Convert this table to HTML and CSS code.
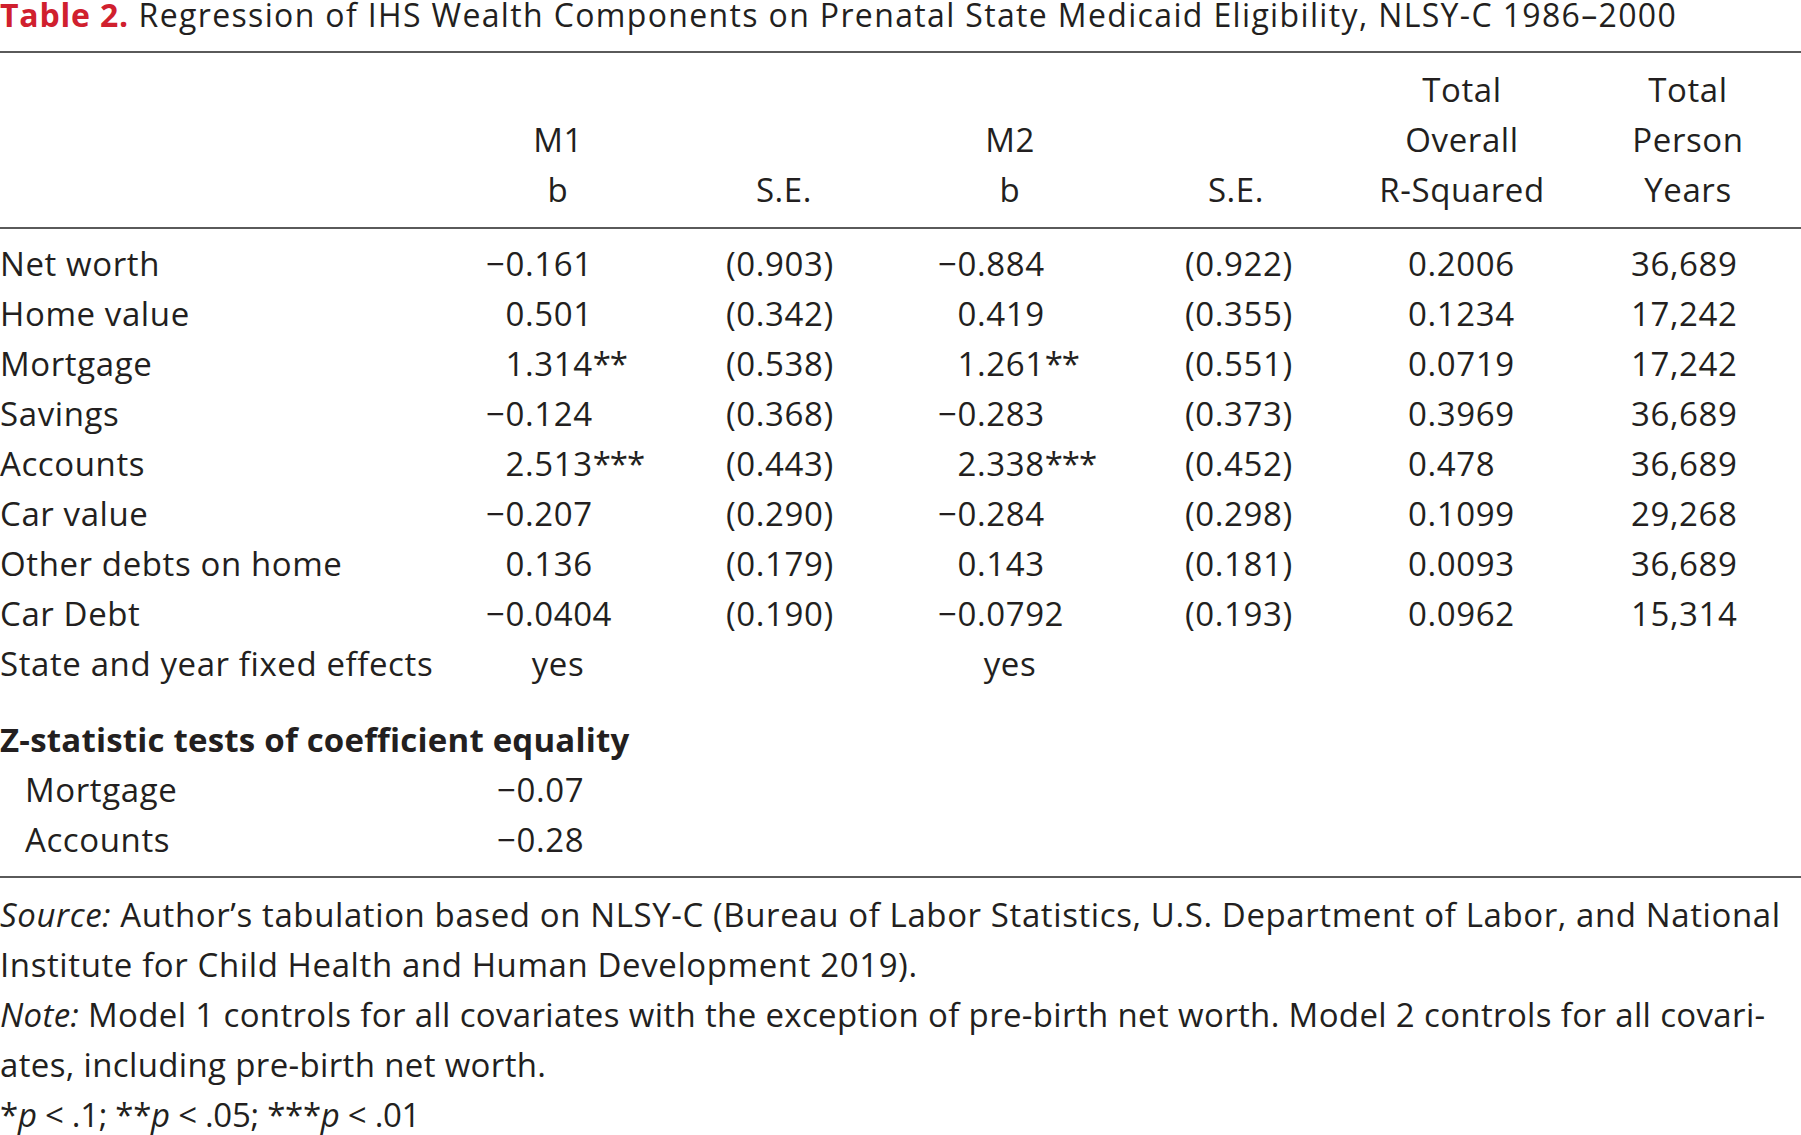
FILE: index.html
```html
<!DOCTYPE html>
<html lang="en">
<head>
<meta charset="utf-8">
<title>Table 2</title>
<link rel="stylesheet" href="styles.css">
</head>
<body>
<div class="page">
  <h1 class="title"><span class="tag">Table 2.</span> Regression of IHS Wealth Components on Prenatal State Medicaid Eligibility, NLSY-C 1986–2000</h1>

  <div class="thead">
    <div class="h"></div>
    <div class="h">M1<br>b</div>
    <div class="h">S.E.</div>
    <div class="h">M2<br>b</div>
    <div class="h">S.E.</div>
    <div class="h">Total<br>Overall<br>R-Squared</div>
    <div class="h">Total<br>Person<br>Years</div>
  </div>

  <div class="tbody">
    <div class="row"><div class="lbl">Net worth</div><div class="c1">−0.161</div><div class="c2">(0.903)</div><div class="c3">−0.884</div><div class="c4">(0.922)</div><div class="c5">0.2006</div><div class="c6">36,689</div></div>
    <div class="row"><div class="lbl">Home value</div><div class="c1 ps">0.501</div><div class="c2">(0.342)</div><div class="c3 ps">0.419</div><div class="c4">(0.355)</div><div class="c5">0.1234</div><div class="c6">17,242</div></div>
    <div class="row"><div class="lbl">Mortgage</div><div class="c1 ps">1.314<span class="st">**</span></div><div class="c2">(0.538)</div><div class="c3 ps">1.261<span class="st">**</span></div><div class="c4">(0.551)</div><div class="c5">0.0719</div><div class="c6">17,242</div></div>
    <div class="row"><div class="lbl">Savings</div><div class="c1">−0.124</div><div class="c2">(0.368)</div><div class="c3">−0.283</div><div class="c4">(0.373)</div><div class="c5">0.3969</div><div class="c6">36,689</div></div>
    <div class="row"><div class="lbl">Accounts</div><div class="c1 ps">2.513<span class="st">***</span></div><div class="c2">(0.443)</div><div class="c3 ps">2.338<span class="st">***</span></div><div class="c4">(0.452)</div><div class="c5">0.478</div><div class="c6">36,689</div></div>
    <div class="row"><div class="lbl">Car value</div><div class="c1">−0.207</div><div class="c2">(0.290)</div><div class="c3">−0.284</div><div class="c4">(0.298)</div><div class="c5">0.1099</div><div class="c6">29,268</div></div>
    <div class="row"><div class="lbl">Other debts on home</div><div class="c1 ps">0.136</div><div class="c2">(0.179)</div><div class="c3 ps">0.143</div><div class="c4">(0.181)</div><div class="c5">0.0093</div><div class="c6">36,689</div></div>
    <div class="row"><div class="lbl">Car Debt</div><div class="c1">−0.0404</div><div class="c2">(0.190)</div><div class="c3">−0.0792</div><div class="c4">(0.193)</div><div class="c5">0.0962</div><div class="c6">15,314</div></div>
    <div class="row"><div class="lbl">State and year fixed effects</div><div class="mid">yes</div><div></div><div class="mid">yes</div><div></div><div></div><div></div></div>
  </div>

  <div class="zstat">
    <div class="zhead">Z-statistic tests of coefficient equality</div>
    <div class="row"><div class="lbl ind">Mortgage</div><div class="cz">−0.07</div></div>
    <div class="row"><div class="lbl ind">Accounts</div><div class="cz">−0.28</div></div>
  </div>

  <div class="notes">
    <p><em>Source:</em> Author’s tabulation based on NLSY-C (Bureau of Labor Statistics, U.S. Department of Labor, and National<br>Institute for Child Health and Human Development 2019).</p>
    <p class="note"><em>Note:</em> Model 1 controls for all covariates with the exception of pre-birth net worth. Model 2 controls for all covari-<br>ates, including pre-birth net worth.</p>
    <p class="sig">*<em>p</em> &lt; .1; **<em>p</em> &lt; .05; ***<em>p</em> &lt; .01</p>
  </div>
</div>
</body>
</html>
```

FILE: styles.css
```css
html, body {
  margin: 0;
  padding: 0;
  background: #ffffff;
  overflow: hidden;
}

.page {
  width: 1801px;
  font-family: "Open Sans", "Liberation Sans", sans-serif;
  font-size: 33px;
  letter-spacing: 0.6px;
  line-height: 50px;
  color: #231f20;
  --cols: 445px repeat(6, 226px);
}

.title {
  margin: 0 0 21px 0;
  font-size: 32px;
  letter-spacing: 1.35px;
  line-height: 30px;
  font-weight: 400;
  white-space: nowrap;
}

.tag {
  color: #d0202e;
  font-weight: 700;
  letter-spacing: 0.8px;
}

.thead {
  display: grid;
  grid-template-columns: var(--cols);
  border-top: 2px solid #5a5a5a;
  border-bottom: 2px solid #5a5a5a;
  padding: 12px 0 12px;
}

.h {
  text-align: center;
  align-self: end;
}

.tbody {
  padding-top: 10px;
}

.row {
  display: grid;
  grid-template-columns: var(--cols);
  height: 50px;
  white-space: nowrap;
}

.c1, .c3 { padding-left: 41px; }
.c2 { padding-left: 55px; }
.c4 { padding-left: 62px; }
.c5 { padding-left: 59px; }
.c6 { padding-left: 56px; }
.cz { padding-left: 52px; }

.ps { padding-left: calc(41.6px + 0.572em); }

.st { letter-spacing: -1px; }

.mid { text-align: center; }

.zstat {
  margin-top: 26px;
  padding-bottom: 11px;
  border-bottom: 2px solid #5a5a5a;
}

.zhead {
  font-weight: 700;
  letter-spacing: 0.2px;
  height: 50px;
  white-space: nowrap;
}

.ind {
  padding-left: 25px;
}

.notes {
  padding-top: 12px;
}

.notes p {
  margin: 0;
  white-space: nowrap;
}

.notes .note {
  letter-spacing: 0.35px;
}

.notes .sig {
  letter-spacing: -0.3px;
}
```
